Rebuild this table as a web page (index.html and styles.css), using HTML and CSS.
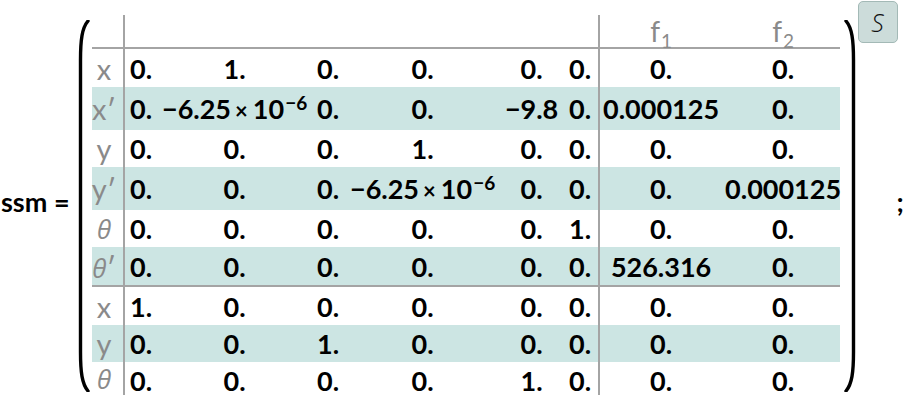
FILE: index.html
```html
<!DOCTYPE html>
<html>
<head>
<meta charset="utf-8">
<link rel="stylesheet" href="styles.css">
</head>
<body>
<div class="expr">
  <span class="lhs">ssm =</span>
  <svg class="paren" width="14" height="372" viewBox="0 0 14 372"><path d="M11 1 C5 8 3.5 20 3.5 40 L3.5 332 C3.5 352 5 364 11 371" /></svg>
  <div class="matrix">
    <!-- header -->
    <div class="c hd"></div><div class="c hd vl"></div><div class="c hd"></div><div class="c hd"></div><div class="c hd"></div><div class="c hd"></div><div class="c hd"></div><div class="c hd vl hl"><span>f<sub>1</sub></span></div><div class="c hd hl f2"><span>f<sub>2</sub></span></div>
    <!-- x -->
    <div class="c lbl">x</div><div class="c vl">0.</div><div class="c">1.</div><div class="c">0.</div><div class="c">0.</div><div class="c">0.</div><div class="c">0.</div><div class="c vl">0.</div><div class="c f2">0.</div>
    <!-- x' -->
    <div class="c lbl band">x′</div><div class="c vl band">0.</div><div class="c band"><span>−6.25<span class="times">×</span>10<sup>−6</sup></span></div><div class="c band">0.</div><div class="c band">0.</div><div class="c band">−9.8</div><div class="c band">0.</div><div class="c vl band">0.000125</div><div class="c f2 band">0.</div>
    <!-- y -->
    <div class="c lbl">y</div><div class="c vl">0.</div><div class="c">0.</div><div class="c">0.</div><div class="c">1.</div><div class="c">0.</div><div class="c">0.</div><div class="c vl">0.</div><div class="c f2">0.</div>
    <!-- y' -->
    <div class="c lbl band">y′</div><div class="c vl band">0.</div><div class="c band">0.</div><div class="c band">0.</div><div class="c band"><span>−6.25<span class="times">×</span>10<sup>−6</sup></span></div><div class="c band">0.</div><div class="c band">0.</div><div class="c vl band">0.</div><div class="c f2 band">0.000125</div>
    <!-- theta -->
    <div class="c lbl"><i>θ</i></div><div class="c vl">0.</div><div class="c">0.</div><div class="c">0.</div><div class="c">0.</div><div class="c">0.</div><div class="c">1.</div><div class="c vl">0.</div><div class="c f2">0.</div>
    <!-- theta' -->
    <div class="c lbl band sep"><span><i>θ</i>′</span></div><div class="c vl band sep">0.</div><div class="c band sep">0.</div><div class="c band sep">0.</div><div class="c band sep">0.</div><div class="c band sep">0.</div><div class="c band sep">0.</div><div class="c vl band sep">526.316</div><div class="c f2 band sep">0.</div>
    <!-- x out -->
    <div class="c lbl">x</div><div class="c vl">1.</div><div class="c">0.</div><div class="c">0.</div><div class="c">0.</div><div class="c">0.</div><div class="c">0.</div><div class="c vl">0.</div><div class="c f2">0.</div>
    <!-- y out -->
    <div class="c lbl band">y</div><div class="c vl band">0.</div><div class="c band">0.</div><div class="c band">1.</div><div class="c band">0.</div><div class="c band">0.</div><div class="c band">0.</div><div class="c vl band">0.</div><div class="c f2 band">0.</div>
    <!-- theta out -->
    <div class="c lbl last"><i>θ</i></div><div class="c vl last">0.</div><div class="c last">0.</div><div class="c last">0.</div><div class="c last">0.</div><div class="c last">1.</div><div class="c last">0.</div><div class="c vl last">0.</div><div class="c f2 last">0.</div>
  </div>
  <div class="rwrap">
    <svg class="paren" width="14" height="372" viewBox="0 0 14 372"><path d="M3 1 C9 8 10.5 20 10.5 40 L10.5 332 C10.5 352 9 364 3 371" /></svg>
    <span class="badge">S</span>
  </div>
  <span class="semi">;</span>
</div>
</body>
</html>
```

FILE: styles.css
```css
html, body {
  margin: 0;
  padding: 0;
  background: #ffffff;
}
body {
  width: 909px;
  height: 395px;
  overflow: hidden;
  font-family: "Lato", "Open Sans", "DejaVu Sans", sans-serif;
  color: #000;
}
.expr {
  display: flex;
  align-items: flex-start;
}
.lhs {
  font-weight: 700;
  font-size: 27px;
  line-height: 30px;
  margin-top: 187px;
  padding-left: 1px;
  margin-right: 7px;
  white-space: nowrap;
}
.paren {
  margin-top: 20px;
  flex: none;
}
.paren path {
  fill: none;
  stroke: #000;
  stroke-width: 3.4;
  stroke-linecap: round;
}
.matrix {
  margin-top: 15px;
  margin-left: 1px;
  margin-right: 3px;
  display: grid;
  grid-template-columns: 31px 35px 154px 33px 156px 62px 35px 125px 117px;
  grid-template-rows: 34px 38px 43px 37px 43px 37px 40px 38px 37px 33px;
  flex: none;
}
.c {
  box-sizing: border-box;
  display: flex;
  align-items: center;
  justify-content: center;
  font-size: 27px;
  font-weight: 700;
  line-height: 1;
  white-space: nowrap;
}
.last {
  padding-top: 3px;
}
.band {
  background: #cce5e3;
}
.vl {
  border-left: 2px solid #a4a4a4;
}
.hd {
  border-bottom: 2px solid #a4a4a4;
}
.sep {
  border-bottom: 2px solid #a4a4a4;
}
.lbl {
  font-weight: 400;
  font-size: 29px;
  color: #8a8a8a;
  padding-right: 6px;
}
.lbl.last {
  padding-top: 0;
}
.lbl i {
  display: inline-block;
  font-family: "Open Sans", "DejaVu Sans", sans-serif;
  font-size: 26px;
  line-height: 24px;
  height: 24px;
}
.hl {
  font-weight: 400;
  font-size: 28px;
  color: #8a8a8a;
}
.hl sub {
  font-size: 19px;
  line-height: 0;
  vertical-align: -6px;
  margin-left: 1px;
}
.f2 {
  padding-left: 4px;
}
.times {
  font-size: 22px;
  margin: 0 5px 0 4px;
}
.c sup {
  font-size: 19px;
  line-height: 0;
  vertical-align: 9px;
  margin-left: 1px;
}
.rwrap {
  position: relative;
  flex: none;
}
.badge {
  position: absolute;
  left: 15px;
  top: 1px;
  width: 40px;
  height: 42px;
  box-sizing: border-box;
  border: 1.5px solid #a3b9b6;
  border-radius: 5px;
  background: #ccdcda;
  display: flex;
  align-items: center;
  justify-content: center;
  font-family: "Open Sans", "DejaVu Sans", sans-serif;
  font-style: italic;
  font-weight: 300;
  font-size: 25px;
  color: #111;
}
.semi {
  font-weight: 700;
  font-size: 27px;
  line-height: 30px;
  margin-top: 187px;
  margin-left: 40px;
}
```
